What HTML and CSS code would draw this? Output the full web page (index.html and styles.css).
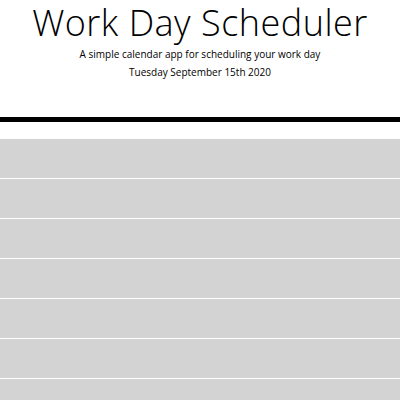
FILE: index.html
```html
<!DOCTYPE html>
<html>
<head>
<meta charset="utf-8">
<link rel="stylesheet" href="styles.css">
</head>
<body>
<header class="jumbotron">
  <h1 class="title">Work Day Scheduler</h1>
  <p class="lead">A simple calendar app for scheduling your work day</p>
  <p class="date">Tuesday September 15th 2020</p>
</header>
<main class="container">
  <div class="row"></div>
  <div class="row"></div>
  <div class="row"></div>
  <div class="row"></div>
  <div class="row"></div>
  <div class="row"></div>
  <div class="row"></div>
</main>
</body>
</html>
```
FILE: styles.css
```css
html, body {
  margin: 0;
  padding: 0;
  background: #fff;
  font-family: "Open Sans", sans-serif;
  color: #000;
  overflow: hidden;
}
.jumbotron {
  text-align: center;
  border-bottom: 5px solid #000;
  height: 117px;
  box-sizing: content-box;
  padding: 0;
}
.title {
  margin: 0;
  font-size: 36px;
  font-weight: 300;
  line-height: 45px;
  letter-spacing: 0.5px;
}
.lead {
  margin: 1px 0 0;
  font-size: 10px;
  line-height: 16px;
}
.date {
  margin: 2px 0 0;
  font-size: 10px;
  line-height: 16px;
}
.container {
  margin-top: 17px;
}
.row {
  height: 39px;
  background: #d3d3d3;
  border-bottom: 1px solid #fff;
}
```
